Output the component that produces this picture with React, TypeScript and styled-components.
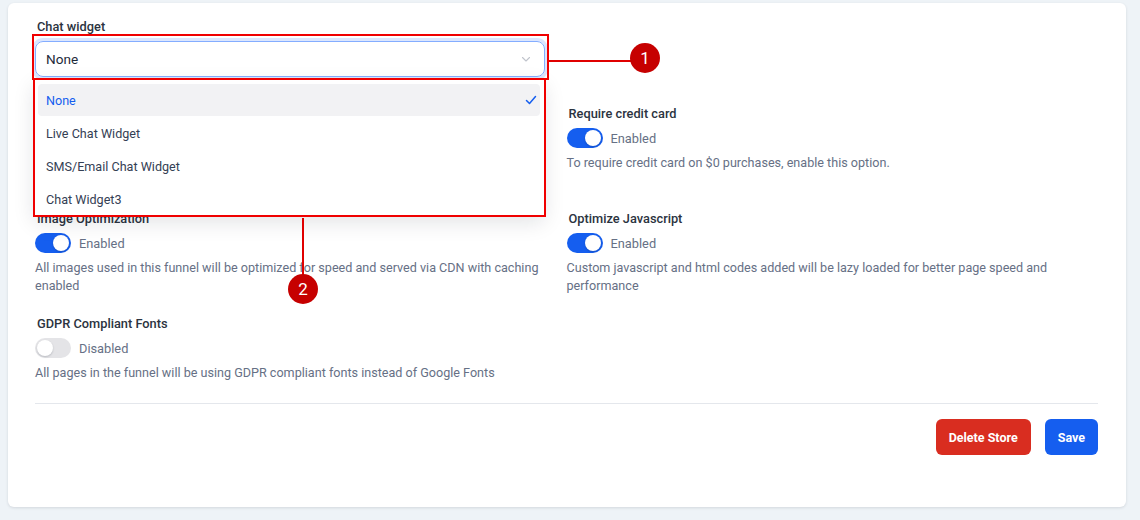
import styled, { createGlobalStyle } from 'styled-components';

const GlobalStyle = createGlobalStyle`
  html, body {
    margin: 0;
    padding: 0;
    background: #eef3f7;
    font-family: Roboto, "Liberation Sans", Arial, sans-serif;
  }
  * { box-sizing: border-box; }
`;

interface ISetting {
  title: string;
  enabled: boolean;
  text: string;
}

const settings: ISetting[] = [
  {
    title: 'Hide Branding',
    enabled: true,
    text: 'Remove the branding badge shown at the bottom of every page in this funnel to keep the pages clean',
  },
  {
    title: 'Require credit card',
    enabled: true,
    text: 'To require credit card on $0 purchases, enable this option.',
  },
  {
    title: 'Image Optimization',
    enabled: true,
    text: 'All images used in this funnel will be optimized for speed and served via CDN with caching enabled',
  },
  {
    title: 'Optimize Javascript',
    enabled: true,
    text: 'Custom javascript and html codes added will be lazy loaded for better page speed and performance',
  },
  {
    title: 'GDPR Compliant Fonts',
    enabled: false,
    text: 'All pages in the funnel will be using GDPR compliant fonts instead of Google Fonts',
  },
];

const options = ['None', 'Live Chat Widget', 'SMS/Email Chat Widget', 'Chat Widget3'];

const Toggle = ({ on }: { on: boolean }) => (
  <SToggle $on={on}>
    <SKnob $on={on} />
  </SToggle>
);

export default function App() {
  return (
    <>
      <GlobalStyle />
      <SPage>
        <SCard>
          <SField>
            <SLabel>Chat widget</SLabel>
            <SSelect>
              <span>None</span>
              <svg width="12" height="12" viewBox="0 0 12 12" fill="none">
                <path d="M2.5 4.5 6 8l3.5-3.5" stroke="#c0c4cc" strokeWidth="1.1" strokeLinecap="round" strokeLinejoin="round" />
              </svg>
            </SSelect>
            <SMenu>
              {options.map((o, i) => (
                <SOption key={o} $active={i === 0}>
                  {o}
                  {i === 0 && (
                    <svg width="14" height="14" viewBox="0 0 14 14" fill="none">
                      <path d="M2.5 7.5 5.5 10.5 11.5 3.5" stroke="#155eef" strokeWidth="1.5" strokeLinecap="round" strokeLinejoin="round" />
                    </svg>
                  )}
                </SOption>
              ))}
            </SMenu>
            <SMark $top={-7} $left={-3} $width={517} $height={46} />
            <SMark $top={37} $left={-2} $width={513} $height={139} />
            <SLineH />
            <SBadge $top={2} $left={595}>1</SBadge>
            <SLineV />
            <SBadge $top={233} $left={253}>2</SBadge>
          </SField>

          <SGrid>
            {settings.map((s) => (
              <SItem key={s.title}>
                <SLabel>{s.title}</SLabel>
                <SToggleRow>
                  <Toggle on={s.enabled} />
                  <SState>{s.enabled ? 'Enabled' : 'Disabled'}</SState>
                </SToggleRow>
                <SText>{s.text}</SText>
              </SItem>
            ))}
          </SGrid>

          <SDivider />

          <SActions>
            <SButton $variant="danger">Delete Store</SButton>
            <SButton $variant="primary">Save</SButton>
          </SActions>
        </SCard>
      </SPage>
    </>
  );
}

const SPage = styled.div`
  padding: 3px 14px 13px 8px;
`;

const SCard = styled.div`
  background: #fff;
  border-radius: 6px;
  height: 504px;
  padding: 15px 28px 0 27px;
  box-shadow: 0 1px 3px rgba(16, 24, 40, 0.12);
`;

const SField = styled.div`
  position: relative;
  display: flex;
  flex-direction: column;
  gap: 5px;
  width: 510px;
`;

const SLabel = styled.div`
  font-size: 12.8px;
  font-weight: 500;
  line-height: 18px;
  color: #2b3340;
  padding-left: 2px;
`;

const SSelect = styled.div`
  display: flex;
  align-items: center;
  justify-content: space-between;
  height: 36px;
  padding: 0 12px 0 10px;
  border: 1px solid #84adff;
  border-radius: 8px;
  box-shadow: 0 0 0 3px #dbe6fe;
  font-size: 13.6px;
  color: #1d2939;
`;

const SMenu = styled.div`
  position: absolute;
  top: 62px;
  left: -1px;
  width: 510px;
  display: flex;
  flex-direction: column;
  gap: 1px;
  padding: 4px 4px 1px;
  background: #fff;
  box-shadow: 0 6px 20px rgba(16, 24, 40, 0.12);
  z-index: 2;
`;

const SOption = styled.div<{ $active: boolean }>`
  display: flex;
  align-items: center;
  justify-content: space-between;
  height: 32px;
  padding: 0 2px 0 8px;
  border-radius: 4px;
  font-size: 12.6px;
  color: ${(p) => (p.$active ? '#155eef' : '#344054')};
  background: ${(p) => (p.$active ? '#f2f2f4' : 'transparent')};
`;

const SMark = styled.div<{ $top: number; $left: number; $width: number; $height: number }>`
  position: absolute;
  top: ${(p) => p.$top + 23}px;
  left: ${(p) => p.$left}px;
  width: ${(p) => p.$width}px;
  height: ${(p) => p.$height}px;
  border: 2px solid #f00000;
  z-index: 3;
  pointer-events: none;
`;

const SLineH = styled.div`
  position: absolute;
  top: 42px;
  left: 514px;
  width: 84px;
  height: 2px;
  background: #e00000;
  z-index: 3;
`;

const SLineV = styled.div`
  position: absolute;
  top: 200px;
  left: 267px;
  width: 2px;
  height: 60px;
  background: #e00000;
  z-index: 3;
`;

const SBadge = styled.div<{ $top: number; $left: number }>`
  position: absolute;
  top: ${(p) => p.$top + 23}px;
  left: ${(p) => p.$left}px;
  width: 30px;
  height: 30px;
  border-radius: 50%;
  background: #c60000;
  color: #fff;
  font-size: 17px;
  display: flex;
  align-items: center;
  justify-content: center;
  z-index: 4;
`;

const SGrid = styled.div`
  display: grid;
  grid-template-columns: 1fr 1fr;
  row-gap: 20px;
  margin-top: 28px;
`;

const SItem = styled.div`
  display: flex;
  flex-direction: column;
  padding-right: 8px;
`;

const SToggleRow = styled.div`
  display: flex;
  align-items: center;
  gap: 8px;
  margin-top: 5px;
`;

const SToggle = styled.div<{ $on: boolean }>`
  width: 36px;
  height: 20px;
  border-radius: 10px;
  padding: 2px;
  background: ${(p) => (p.$on ? '#155eef' : '#e4e4e7')};
  display: flex;
  justify-content: ${(p) => (p.$on ? 'flex-end' : 'flex-start')};
`;

const SKnob = styled.div<{ $on: boolean }>`
  width: 16px;
  height: 16px;
  border-radius: 50%;
  background: #fff;
  box-shadow: 0 1px 2px rgba(16, 24, 40, 0.2);
`;

const SState = styled.span`
  font-size: 12.8px;
  color: #667085;
`;

const SText = styled.div`
  font-size: 12.6px;
  line-height: 18px;
  color: #667085;
  margin-top: 6px;
`;

const SDivider = styled.div`
  height: 1px;
  background: #e4e7ec;
  margin-top: 21px;
`;

const SActions = styled.div`
  display: flex;
  justify-content: flex-end;
  gap: 14px;
  margin-top: 15px;
`;

const SButton = styled.button<{ $variant: 'danger' | 'primary' }>`
  height: 36px;
  padding: 0 13px;
  border: none;
  border-radius: 6px;
  font-family: inherit;
  font-size: 12.5px;
  font-weight: 700;
  color: #fff;
  background: ${(p) => (p.$variant === 'danger' ? '#d92d20' : '#155eef')};
`;
